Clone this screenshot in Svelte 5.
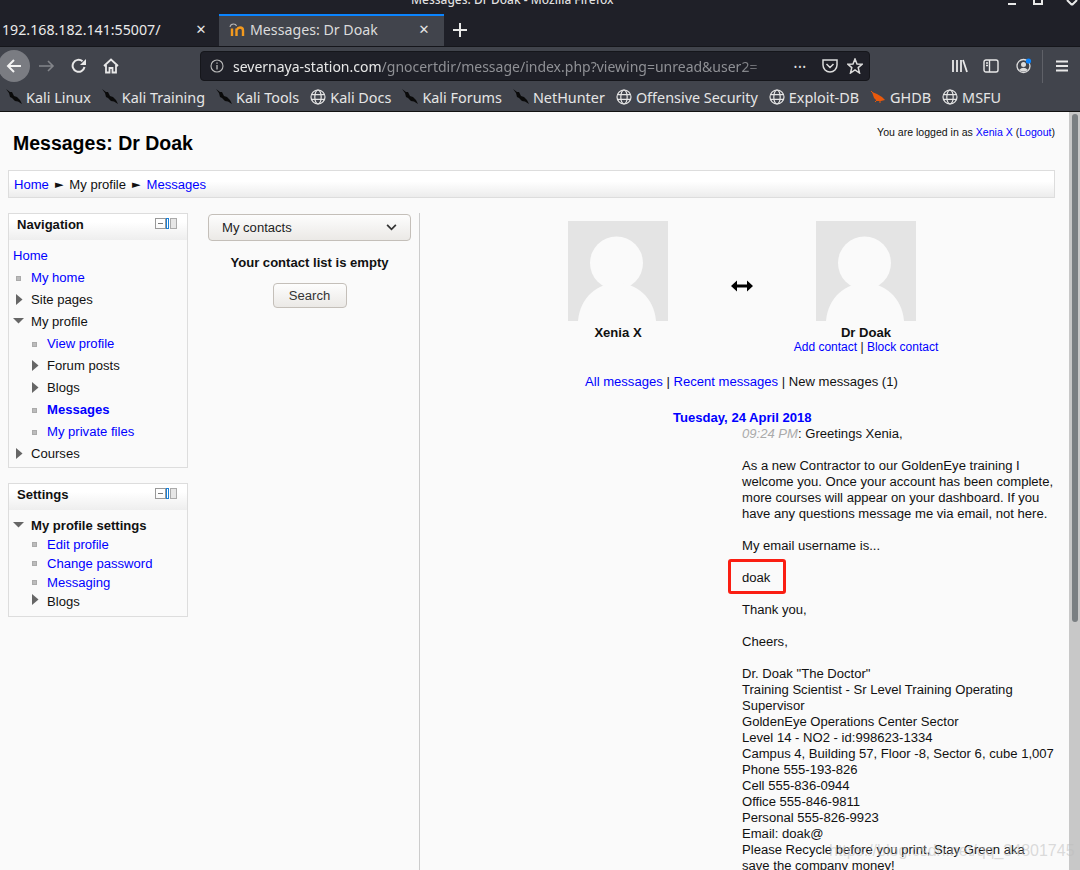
<script lang="ts">
	const KALI = 'M0 0 L4 3 L6 3 L8 7 L11 8 L14 11 L16 15 L12 12.5 L9 12 L6 9 L4 8 L3 4 Z';

	const bookmarks = [
		{ label: 'Kali Linux', icon: 'kali' },
		{ label: 'Kali Training', icon: 'kali' },
		{ label: 'Kali Tools', icon: 'kali' },
		{ label: 'Kali Docs', icon: 'globe' },
		{ label: 'Kali Forums', icon: 'kali' },
		{ label: 'NetHunter', icon: 'kali' },
		{ label: 'Offensive Security', icon: 'globe' },
		{ label: 'Exploit-DB', icon: 'globe' },
		{ label: 'GHDB', icon: 'bug' },
		{ label: 'MSFU', icon: 'globe' },
	];

	const navItems = [
		{ label: 'My home', kind: 'leaf', link: true, depth: 0 },
		{ label: 'Site pages', kind: 'closed', depth: 0 },
		{ label: 'My profile', kind: 'open', depth: 0 },
		{ label: 'View profile', kind: 'leaf', link: true, depth: 1 },
		{ label: 'Forum posts', kind: 'closed', depth: 1 },
		{ label: 'Blogs', kind: 'closed', depth: 1 },
		{ label: 'Messages', kind: 'leaf', link: true, bold: true, depth: 1 },
		{ label: 'My private files', kind: 'leaf', link: true, depth: 1 },
		{ label: 'Courses', kind: 'closed', depth: 0 },
	];

	const settingsItems = [
		{ label: 'Edit profile', kind: 'leaf', link: true, depth: 1 },
		{ label: 'Change password', kind: 'leaf', link: true, depth: 1 },
		{ label: 'Messaging', kind: 'leaf', link: true, depth: 1 },
		{ label: 'Blogs', kind: 'closed', depth: 1 },
	];

	const signature = [
		'Dr. Doak "The Doctor"',
		'Training Scientist - Sr Level Training Operating Supervisor',
		'GoldenEye Operations Center Sector',
		'Level 14 - NO2 - id:998623-1334',
		'Campus 4, Building 57, Floor -8, Sector 6, cube 1,007',
		'Phone 555-193-826',
		'Cell 555-836-0944',
		'Office 555-846-9811',
		'Personal 555-826-9923',
		'Email: doak@',
		'Please Recycle before you print, Stay Green aka save the company money!',
	];
</script>

{#snippet marker(kind)}
	{#if kind === 'leaf'}
		<span class="marker leaf"></span>
	{:else if kind === 'closed'}
		<svg class="marker closed" viewBox="0 0 7 11" width="7" height="11"><path fill="#666" d="M0 0 L6.5 5.5 L0 11 Z" /></svg>
	{:else}
		<svg class="marker open" viewBox="0 0 11 6" width="11" height="6"><path fill="#666" d="M0 0 H11 L5.5 5.5 Z" /></svg>
	{/if}
{/snippet}

{#snippet blockControls()}
	<span class="controls">
		<span class="ctl-min"></span>
		<span class="ctl-bar"></span>
		<span class="ctl-dock"></span>
	</span>
{/snippet}

{#snippet treeRow(item)}
	<li class="tree-row" class:indent={item.depth === 1}>
		{@render marker(item.kind)}
		{#if item.link}
			<a href="#top" class:strong={item.bold}>{item.label}</a>
		{:else}
			<span>{item.label}</span>
		{/if}
	</li>
{/snippet}

{#snippet avatar()}
	<svg class="avatar" viewBox="0 0 100 100" width="100" height="100">
		<rect width="100" height="100" fill="#e4e4e4" />
		<circle cx="48.5" cy="42" r="26.5" fill="#fafafa" />
		<path fill="#fafafa" d="M10 100 C12 76 30 62 49 62 C68 62 86 76 88 100 Z" />
	</svg>
{/snippet}

<div class="window">
	<header class="chrome">
		<div class="titlebar">
			<span class="wintitle">Messages: Dr Doak - Mozilla Firefox</span>
			<span class="winbtns">
				<svg viewBox="0 0 70 6" width="70" height="6"><path fill="none" stroke="#e8e8e8" stroke-width="2" d="M0 4 H8 M26 0 V4 H34 V0 M59 0 L64 5 M69 0 L64 5" /></svg>
			</span>
		</div>
		<div class="tabstrip">
			<div class="tab first">
				<span class="tab-label">192.168.182.141:55007/</span>
				<span class="tab-close">✕</span>
			</div>
			<div class="tab current">
				<svg viewBox="0 0 16 14" width="16" height="14">
					<path fill="none" stroke="#f39a1e" stroke-width="2.4" d="M3 13 V5.5 M7.5 13 V5.5 M7.5 7 Q9 4.5 11 4.5 Q14 4.5 14 7.5 V13" />
					<path fill="none" stroke="#b5b5b5" stroke-width="1.1" d="M1 4 Q1.5 1 4.5 1 Q7 1 7.5 3" />
				</svg>
				<span class="tab-label">Messages: Dr Doak</span>
				<span class="tab-close">✕</span>
			</div>
			<svg class="newtab" viewBox="0 0 14 14" width="14" height="14"><path stroke="#e8e8e8" stroke-width="2" d="M7 0 V14 M0 7 H14" /></svg>
		</div>
		<div class="toolbar">
			<span class="back">
				<svg viewBox="0 0 16 16" width="16" height="16"><path fill="none" stroke="#f4f4f4" stroke-width="2" d="M15 8 H2 M8 2 L2 8 L8 14" /></svg>
			</span>
			<svg class="nav-icon" viewBox="0 0 16 16" width="16" height="16"><path fill="none" stroke="#83858a" stroke-width="1.6" d="M0 8 H14 M9 3 L14 8 L9 13" /></svg>
			<svg class="nav-icon" viewBox="0 0 16 16" width="16" height="16"><path fill="none" stroke="#e8e8e8" stroke-width="2" d="M13.5 9 A6 6 0 1 1 11.5 3.2" /><path fill="#e8e8e8" d="M15 1 V7 H9 Z" /></svg>
			<svg class="nav-icon" viewBox="0 0 16 16" width="16" height="16"><path fill="none" stroke="#e8e8e8" stroke-width="1.8" d="M1 8 L8 1.5 L15 8 M3 7 V14.5 H6.5 V10 H9.5 V14.5 H13 V7" /></svg>
			<div class="urlbar">
				<svg viewBox="0 0 14 14" width="14" height="14"><circle cx="7" cy="7" r="6" fill="none" stroke="#bbb" stroke-width="1.1" /><path stroke="#bbb" stroke-width="1.3" d="M7 6 V10.5 M7 3.4 V4.8" /></svg>
				<span class="url"><b>severnaya-station.com</b>/gnocertdir/message/index.php?viewing=unread&amp;user2=</span>
				<span class="dots">•••</span>
				<svg viewBox="0 0 16 14" width="16" height="14"><path fill="none" stroke="#dcdcdc" stroke-width="1.5" d="M1 1 H15 V6 A7 7 0 0 1 1 6 Z M4.5 5 L8 8.5 L11.5 5" /></svg>
				<svg viewBox="0 0 16 16" width="16" height="16"><path fill="none" stroke="#dcdcdc" stroke-width="1.5" d="M8 1 L10 6 L15 6.3 L11.2 9.6 L12.5 15 L8 12 L3.5 15 L4.8 9.6 L1 6.3 L6 6 Z" /></svg>
			</div>
			<div class="tools">
				<svg viewBox="0 0 16 14" width="16" height="14"><path fill="none" stroke="#e8e8e8" stroke-width="1.8" d="M1 1 V13 M5 1 V13 M9 1 V13 M11 1 L15 13" /></svg>
				<svg viewBox="0 0 16 14" width="16" height="14"><rect x="1" y="1" width="14" height="12" rx="2" fill="none" stroke="#e8e8e8" stroke-width="1.4" /><path stroke="#e8e8e8" stroke-width="1.4" d="M6.5 1 V13 M3 4 H5 M3 6.5 H5" /></svg>
				<svg class="account" viewBox="0 0 16 16" width="16" height="16">
					<circle cx="7.5" cy="8" r="6.5" fill="none" stroke="#dcdcdc" stroke-width="1.3" />
					<circle cx="7.5" cy="6.5" r="2.5" fill="#dcdcdc" />
					<path fill="#dcdcdc" d="M3 12 Q7.5 7.5 12 12 Q7.5 15 3 12 Z" />
					<circle cx="12.5" cy="3" r="2.6" fill="#0a84ff" />
				</svg>
				<span class="sep"></span>
				<svg class="menu" viewBox="0 0 12 12" width="12" height="12"><path stroke="#e8e8e8" stroke-width="1.8" d="M0 1.5 H12 M0 6 H12 M0 10.5 H12" /></svg>
			</div>
		</div>
		<nav class="bookmarks">
			{#each bookmarks as mark}
				<span class="bookmark">
					{#if mark.icon === 'kali'}
						<svg viewBox="0 0 16 16" width="16" height="16"><path fill="#0a0a0a" d={KALI} /></svg>
					{:else if mark.icon === 'globe'}
						<svg viewBox="0 0 16 16" width="16" height="16"><g fill="none" stroke="#e4e4e4" stroke-width="1.2"><circle cx="8" cy="8" r="7" /><ellipse cx="8" cy="8" rx="3.2" ry="7" /><path d="M1.3 5.6 H14.7 M1.3 10.4 H14.7" /></g></svg>
					{:else}
						<svg viewBox="0 0 16 16" width="16" height="16"><path fill="#e8590c" d="M2 3 L7 5 L12 8 L15 11 L11 12 L7 12 L4 9 Z" /><path stroke="#e8590c" d="M1 2 L4 5 M5 13 L7 11 M10 14 L10 11" /></svg>
					{/if}
					{mark.label}
				</span>
			{/each}
		</nav>
	</header>

	<div class="viewport">
		<main class="page" id="top">
			<div class="page-head">
				<h1>Messages: Dr Doak</h1>
				<p class="login">You are logged in as <a href="#top">Xenia X</a> (<a href="#top">Logout</a>)</p>
			</div>
			<div class="breadcrumb">
				<a href="#top">Home</a>
				<span class="crumb-sep">►</span>
				<span>My profile</span>
				<span class="crumb-sep">►</span>
				<a href="#top">Messages</a>
			</div>

			<div class="columns">
				<aside class="side">
					<section class="block">
						<div class="block-head"><h2>Navigation</h2>{@render blockControls()}</div>
						<div class="block-body nav-body">
							<a class="home" href="#top">Home</a>
							<ul class="tree">
								{#each navItems as item}
									{@render treeRow(item)}
								{/each}
							</ul>
						</div>
					</section>
					<section class="block">
						<div class="block-head"><h2>Settings</h2>{@render blockControls()}</div>
						<div class="block-body settings-body">
							<div class="tree-row settings-title">
								{@render marker('open')}
								<strong>My profile settings</strong>
							</div>
							<ul class="tree tight">
								{#each settingsItems as item}
									{@render treeRow(item)}
								{/each}
							</ul>
						</div>
					</section>
				</aside>

				<section class="contacts">
					<div class="select">
						My contacts
						<svg viewBox="0 0 12 8" width="11" height="7"><path fill="none" stroke="#333" stroke-width="2" d="M1 1 L6 6 L11 1" /></svg>
					</div>
					<p class="empty">Your contact list is empty</p>
					<button class="search">Search</button>
				</section>

				<section class="discussion">
					<div class="people">
						<div class="person">
							{@render avatar()}
							<strong>Xenia X</strong>
						</div>
						<svg class="arrows" viewBox="0 0 22 12" width="22" height="12"><path fill="#000" d="M0 6 L6 0.5 V4.5 H16 V0.5 L22 6 L16 11.5 V7.5 H6 V11.5 Z" /></svg>
						<div class="person">
							{@render avatar()}
							<strong>Dr Doak</strong>
							<span class="person-links"><a href="#top">Add contact</a> | <a href="#top">Block contact</a></span>
						</div>
					</div>
					<p class="filters"><a href="#top">All messages</a> | <a href="#top">Recent messages</a> | New messages (1)</p>
					<a class="date" href="#top">Tuesday, 24 April 2018</a>
					<div class="message">
						<p><em>09:24 PM</em>: Greetings Xenia,</p>
						<p>As a new Contractor to our GoldenEye training I welcome you. Once your account has been complete, more courses will appear on your dashboard. If you have any questions message me via email, not here.</p>
						<p>My email username is...</p>
						<p class="username">doak</p>
						<p>Thank you,</p>
						<p>Cheers,</p>
						<p>
							{#each signature as line}
								{line}<br />
							{/each}
						</p>
					</div>
				</section>
			</div>
		</main>
		<div class="scrollbar"><div class="thumb"></div></div>
		<span class="watermark">https://blog.csdn.net/qq_34801745</span>
	</div>
</div>

<style>
	:global(body) {
		margin: 0;
		background: #fafafa;
		font-family: "Liberation Sans", Arial, sans-serif;
	}

	.window {
		width: 1080px;
		height: 870px;
		display: flex;
		flex-direction: column;
		overflow: hidden;
	}

	/* browser chrome */
	.chrome {
		background: #1f2028;
		color: #e8e8e8;
		font-family: "Noto Sans", sans-serif;
		flex-shrink: 0;
	}

	.titlebar {
		height: 14px;
		position: relative;
		overflow: hidden;
	}

	.wintitle {
		position: absolute;
		left: 411px;
		top: -8px;
		font-size: 12px;
		line-height: 16px;
		font-weight: 500;
		white-space: nowrap;
		color: #dfdfdf;
	}

	.winbtns {
		position: absolute;
		right: 2px;
		top: 0;
		line-height: 0;
	}

	.tabstrip {
		height: 32px;
		display: flex;
		align-items: stretch;
	}

	.tab {
		display: flex;
		align-items: center;
		box-sizing: border-box;
		font-size: 14.2px;
		padding-bottom: 1px;
	}

	.tab.first {
		width: 219px;
		padding-left: 2px;
		color: #eaeaea;
	}

	.tab.current {
		width: 225px;
		padding: 0 10px 3px;
		gap: 5px;
		background: #41444c;
		border-top: 2px solid #0a84ff;
		color: #dcdcdc;
	}

	.tab-label {
		flex: 1;
		white-space: nowrap;
	}

	.tab-close {
		font-size: 13px;
		width: 20px;
		color: #e4e4e4;
		text-align: center;
		font-family: "DejaVu Sans", sans-serif;
	}

	.tab.first .tab-close {
		margin-right: 8px;
	}

	.newtab {
		align-self: center;
		margin-left: 9px;
	}

	.toolbar {
		height: 39px;
		background: #41444c;
		display: flex;
		align-items: center;
		border-top: 1px solid #15161b;
		box-sizing: border-box;
	}

	.back {
		width: 32px;
		height: 32px;
		margin-left: -2px;
		margin-right: 9px;
		border-radius: 50%;
		background: #7a7c82;
		display: flex;
		align-items: center;
		justify-content: center;
		flex-shrink: 0;
	}

	.nav-icon {
		margin-right: 16px;
		flex-shrink: 0;
	}

	.urlbar {
		width: 670px;
		height: 30px;
		margin-left: 65px;
		box-sizing: border-box;
		background: #1f2028;
		border: 1px solid #15161b;
		border-radius: 4px;
		display: flex;
		align-items: center;
		padding: 0 6px 0 9px;
		gap: 9px;
		flex-shrink: 0;
	}

	.url {
		flex: 1;
		min-width: 0;
		font-size: 14px;
		color: #8f9095;
		white-space: nowrap;
		overflow: hidden;
		mask-image: linear-gradient(to right, #000 92%, transparent);
	}

	.url b {
		font-weight: 400;
		color: #e8e8e8;
	}

	.dots {
		font-size: 9px;
		letter-spacing: 1px;
		margin-right: 6px;
		color: #dcdcdc;
	}

	.tools {
		display: flex;
		align-items: center;
		gap: 15px;
		margin-left: 82px;
	}

	.account {
		margin-left: 2px;
	}

	.sep {
		width: 1px;
		height: 33px;
		background: #5f6168;
		margin-left: -5px;
	}

	.menu {
		margin-left: -2px;
	}

	.bookmarks {
		height: 27px;
		background: #41444c;
		display: flex;
		align-items: center;
		padding: 0 0 2px 6px;
		gap: 11px;
		font-size: 14.4px;
		color: #e6e6e6;
		border-bottom: 1px solid #111;
		box-sizing: border-box;
		white-space: nowrap;
	}

	.bookmark {
		display: flex;
		align-items: center;
		gap: 4px;
	}

	/* page */
	.viewport {
		flex: 1;
		min-height: 0;
		display: flex;
		position: relative;
		background: #fafafa;
		overflow: hidden;
	}

	.page {
		flex: 1;
		min-width: 0;
		padding: 0 14px 0 8px;
		font-size: 13.08px;
		color: #111;
	}

	.scrollbar {
		width: 11px;
		background: #c8c8c8;
		padding: 2px 2px 0 3px;
		box-sizing: border-box;
		flex-shrink: 0;
	}

	.thumb {
		height: 508px;
		border-radius: 3px;
		background: #7a7f82;
	}

	.watermark {
		position: absolute;
		left: 829px;
		top: 730px;
		font-size: 16px;
		color: rgba(190, 190, 190, 0.55);
		white-space: nowrap;
	}

	a {
		color: #00f;
		text-decoration: none;
	}

	.page-head {
		display: flex;
		justify-content: space-between;
		height: 58px;
	}

	h1 {
		margin: 19px 0 0 5px;
		font-size: 19.5px;
		line-height: 24px;
		color: #000;
	}

	.login {
		margin: 14px 0 0;
		font-size: 10.55px;
		line-height: 13px;
	}

	.breadcrumb {
		height: 28px;
		box-sizing: border-box;
		border: 1px solid #ddd;
		background: linear-gradient(#fff 40%, #ececec);
		display: flex;
		align-items: center;
		gap: 6px;
		padding-left: 5px;
	}

	.crumb-sep {
		font-size: 11px;
		color: #111;
		font-family: "DejaVu Sans", sans-serif;
	}

	.columns {
		display: flex;
		margin-top: 15px;
	}

	.side {
		width: 180px;
		flex-shrink: 0;
		display: flex;
		flex-direction: column;
		gap: 15px;
	}

	.block {
		border: 1px solid #ddd;
		box-sizing: border-box;
	}

	.block-head {
		height: 26px;
		display: flex;
		justify-content: space-between;
		padding: 3px 10px 0 8px;
		box-sizing: border-box;
		background: linear-gradient(#fff 30%, #eee);
	}

	h2 {
		margin: 0;
		font-size: 13.08px;
		line-height: 16px;
		color: #111;
	}

	.controls {
		display: flex;
		height: 11px;
		margin-top: 1px;
	}

	.ctl-min {
		width: 9px;
		height: 9px;
		border: 1px solid #999;
		background: linear-gradient(#777, #777) center / 5px 1px no-repeat;
	}

	.ctl-bar {
		width: 1px;
		height: 9px;
		border: 1px solid #1a7fd6;
		background: #fff;
	}

	.ctl-dock {
		width: 5px;
		height: 9px;
		margin-left: 1px;
		border: 1px solid #aaa;
		background: #e6e6e6;
	}

	.nav-body {
		padding: 5px 0 3px 4px;
		height: 227px;
		box-sizing: border-box;
	}

	.home {
		display: block;
		height: 22px;
		line-height: 22px;
	}

	.tree {
		list-style: none;
		margin: 0;
		padding: 0;
	}

	.tree-row {
		height: 22px;
		line-height: 22px;
		padding-left: 18px;
		position: relative;
		white-space: nowrap;
	}

	.tree-row.indent {
		padding-left: 34px;
	}

	.tree.tight .tree-row {
		height: 19px;
		line-height: 19px;
	}

	.marker {
		position: absolute;
	}

	.marker.closed {
		left: 3px;
		top: 5px;
	}

	.marker.open {
		left: 0;
		top: 7px;
	}

	.marker.leaf {
		width: 3px;
		height: 3px;
		top: 9px;
		left: 3px;
		border: 1px solid #aaa;
		background: #bbb;
	}

	.indent .marker.closed,
	.indent .marker.leaf {
		left: 19px;
	}

	.tree.tight .marker.leaf {
		top: 7px;
	}

	.tree.tight .marker.closed {
		top: 2px;
	}

	.strong {
		font-weight: 700;
	}

	.settings-body {
		padding: 5px 0 4px 4px;
		height: 106px;
		box-sizing: border-box;
	}

	.settings-title {
		height: 20px;
	}

	.contacts {
		width: 203px;
		margin-left: 20px;
		margin-top: 1px;
		flex-shrink: 0;
		display: flex;
		flex-direction: column;
		align-items: center;
	}

	.select {
		width: 100%;
		height: 27px;
		box-sizing: border-box;
		border: 1px solid #c4bfb9;
		border-radius: 4px;
		background: linear-gradient(#fdfdfd, #ebe9e6);
		display: flex;
		align-items: center;
		justify-content: space-between;
		padding: 0 13px;
		color: #222;
	}

	.empty {
		margin: 14px 0 0;
		font-weight: 700;
		line-height: 16px;
		color: #111;
	}

	.search {
		margin-top: 12px;
		width: 74px;
		height: 25px;
		border: 1px solid #c4bfb9;
		border-radius: 4px;
		background: linear-gradient(#fdfdfd, #ebe9e6);
		font: 13.08px "Liberation Sans", Arial, sans-serif;
		color: #333;
		padding: 0;
	}

	.discussion {
		flex: 1;
		min-width: 0;
		margin-left: 8px;
		border-left: 1px solid #ccc;
		height: 660px;
		position: relative;
	}

	.people {
		display: flex;
		align-items: flex-start;
		padding: 8px 0 0 148px;
	}

	.person {
		width: 100px;
		display: flex;
		flex-direction: column;
		align-items: center;
	}

	.person strong {
		margin-top: 4px;
		line-height: 16px;
		color: #111;
		white-space: nowrap;
	}

	.person-links {
		font-size: 12px;
		line-height: 14px;
		margin-top: -1px;
		white-space: nowrap;
	}

	.avatar {
		display: block;
	}

	.arrows {
		margin: 59px 63px 0;
	}

	.filters {
		margin: 20px 0 0 165px;
		line-height: 16px;
		color: #111;
		white-space: nowrap;
	}

	.date {
		display: block;
		margin: 20px 0 0 253px;
		font-weight: 700;
		line-height: 16px;
	}

	.message {
		margin-left: 322px;
		line-height: 16px;
		color: #111;
		width: 314px;
	}

	.message p {
		margin: 0 0 16px;
	}

	.message em {
		color: #aaa;
	}

	.username {
		position: relative;
	}

	/* annotation drawn over the screenshot */
	.username::after {
		content: '';
		position: absolute;
		left: -14px;
		top: -11px;
		width: 52px;
		height: 29px;
		border: 3px solid #fa1e12;
		border-radius: 3px;
	}
</style>
